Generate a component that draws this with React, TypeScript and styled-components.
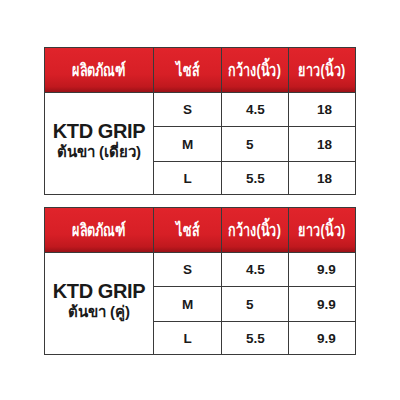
import React from "react";
import styled, { createGlobalStyle } from "styled-components";

type SizeRow = {
  size: string;
  width: string;
  length: string;
};

type Product = {
  name: string;
  variant: string;
  rows: SizeRow[];
};

const products: Product[] = [
  {
    name: "KTD GRIP",
    variant: "ต้นขา (เดี่ยว)",
    rows: [
      { size: "S", width: "4.5", length: "18" },
      { size: "M", width: "5", length: "18" },
      { size: "L", width: "5.5", length: "18" },
    ],
  },
  {
    name: "KTD GRIP",
    variant: "ต้นขา (คู่)",
    rows: [
      { size: "S", width: "4.5", length: "9.9" },
      { size: "M", width: "5", length: "9.9" },
      { size: "L", width: "5.5", length: "9.9" },
    ],
  },
];

const headers = ["ผลิตภัณฑ์", "ไซส์", "กว้าง(นิ้ว)", "ยาว(นิ้ว)"];

const GlobalStyle = createGlobalStyle`
  html, body {
    margin: 0;
    padding: 0;
    background: #ffffff;
  }
  body {
    font-family: "Liberation Sans", "Noto Sans", sans-serif;
  }
`;

const Page = styled.div`
  width: 400px;
  height: 400px;
  box-sizing: border-box;
  padding: 47px 0 0 44px;
  display: flex;
  flex-direction: column;
  gap: 12px;
`;

const Table = styled.div`
  width: 312px;
  box-sizing: border-box;
  display: grid;
  grid-template-columns: 108px 67px 66px 1fr;
  grid-template-rows: 44px 33px 34px 32px;
  gap: 1px;
  background: #3a3a3a;
  border: 1px solid #3a3a3a;
`;

const HeadCell = styled.div`
  display: flex;
  align-items: center;
  justify-content: center;
  padding-bottom: 2px;
  overflow: hidden;
  background: linear-gradient(
    to bottom,
    #e0242b 0%,
    #d71f26 60%,
    #c0181e 88%,
    #9a1117 100%
  );
`;

// the reference uses a condensed Thai face, so squeeze the header label
const HeadLabel = styled.span`
  display: inline-block;
  white-space: nowrap;
  color: #ffffff;
  font-size: 17px;
  font-weight: bold;
  transform: scaleX(0.74);
`;

const NameCell = styled.div`
  grid-row: 2 / span 3;
  grid-column: 1;
  background: #ffffff;
  display: flex;
  flex-direction: column;
  align-items: center;
  justify-content: center;
  color: #1a1a1a;
  padding-bottom: 6px;
`;

const Name = styled.div`
  font-size: 20px;
  font-weight: bold;
  letter-spacing: -0.4px;
  line-height: 22px;
`;

const Variant = styled.div`
  font-size: 15px;
  font-weight: bold;
  line-height: 20px;
`;

const Cell = styled.div<{ $align: "center" | "left"; $pad?: number }>`
  background: #ffffff;
  display: flex;
  align-items: center;
  justify-content: ${(p) => (p.$align === "center" ? "center" : "flex-start")};
  padding-left: ${(p) => p.$pad ?? 0}px;
  color: #1a1a1a;
  font-size: 13.5px;
  font-weight: bold;
`;

const SizeTable = ({ product }: { product: Product }) => (
  <Table>
    {headers.map((h) => (
      <HeadCell key={h}>
        <HeadLabel>{h}</HeadLabel>
      </HeadCell>
    ))}
    <NameCell>
      <Name>{product.name}</Name>
      <Variant>{product.variant}</Variant>
    </NameCell>
    {product.rows.map((r) => (
      <React.Fragment key={r.size}>
        <Cell $align="center">{r.size}</Cell>
        <Cell $align="left" $pad={24}>
          {r.width}
        </Cell>
        <Cell $align="left" $pad={28}>
          {r.length}
        </Cell>
      </React.Fragment>
    ))}
  </Table>
);

export default function App() {
  return (
    <>
      <GlobalStyle />
      <Page>
        {products.map((p, i) => (
          <SizeTable key={i} product={p} />
        ))}
      </Page>
    </>
  );
}
